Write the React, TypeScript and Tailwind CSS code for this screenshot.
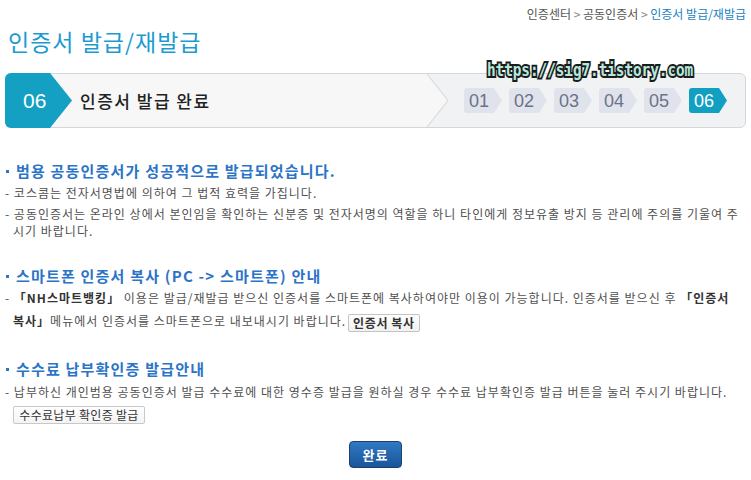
import type { ReactNode } from 'react'

const STEPS = ['01', '02', '03', '04', '05', '06']

function StepBadge({ label, active }: { label: string; active: boolean }) {
  return (
    <div
      className={`flex h-[25px] w-[38px] items-center rounded-l-[3px] pl-[5px] font-['Liberation_Sans',sans-serif] text-[18px] leading-none [clip-path:polygon(0_0,30px_0,38px_50%,30px_100%,0_100%)] ${
        active ? 'bg-[#12a0c2] text-white' : 'bg-[#e0e3eb] text-[#6b7289]'
      }`}
    >
      {label}
    </div>
  )
}

function SectionTitle({ children, className = '' }: { children: ReactNode; className?: string }) {
  return (
    <h2 className={`flex items-center text-[15px] leading-[20px] font-bold tracking-[1.2px] text-[#2b74c7] ${className}`}>
      <span className="mr-[7px] ml-px inline-block h-[3px] w-[3px] bg-[#2b74c7]" />
      {children}
    </h2>
  )
}

function Dash({ children, className = '' }: { children: ReactNode; className?: string }) {
  return <p className={`pl-[8px] -indent-[8px] ${className}`}>- {children}</p>
}

export default function App() {
  return (
    <div className="relative min-h-[480px] w-full bg-white px-[5px] pt-[6px] font-['Noto_Sans_CJK_KR',sans-serif] text-[12px] text-[#505050]">
      <div className="text-right leading-[16px] text-[#555]">
        인증센터 <span className="text-[#888]">&gt;</span> 공동인증서 <span className="text-[#888]">&gt;</span>{' '}
        <span className="text-[#1a7fc1]">인증서 발급/재발급</span>
      </div>

      <h1 className="mt-[4px] pl-[3px] text-[23px] leading-[30px] font-normal tracking-[1px] text-[#1b9bd1]">
        인증서 발급/재발급
      </h1>

      <div className="mt-[17px] flex h-[55px] rounded-[6px] border border-[#d3d6da] bg-[#f1f2f4]">
        <div className="flex flex-1 items-center rounded-l-[6px] bg-[#f7f7f7]">
          <div className="-my-px -ml-px flex h-[55px] w-[67px] items-center rounded-l-[6px] bg-[#13a0c2] pl-[18px] font-['Liberation_Sans',sans-serif] text-[21px] text-white [clip-path:polygon(0_0,45px_0,67px_50%,45px_100%,0_100%)]">
            06
          </div>
          <span className="ml-[8px] text-[17px] font-medium tracking-[1.5px] text-[#222]">인증서 발급 완료</span>
        </div>
        <svg width="22" height="53" viewBox="0 0 22 53" className="shrink-0">
          <polygon points="0,0 1,0 22,26.5 1,53 0,53" fill="#f7f7f7" />
          <polyline points="1,0 22,26.5 1,53" fill="none" stroke="#d9dbde" strokeWidth="1.2" />
        </svg>
        <div className="flex w-[297px] items-center gap-[7px] pl-[16px]">
          {STEPS.map((s) => (
            <StepBadge key={s} label={s} active={s === '06'} />
          ))}
        </div>
      </div>

      <span className="absolute top-[59px] left-[487px] origin-left scale-x-[0.8] font-['DejaVu_Sans_Mono',monospace] text-[18px] leading-[22px] font-bold tracking-[-0.1px] text-[#b4e9dd] [paint-order:stroke_fill] [-webkit-text-stroke:4px_#1c1c1c]">
        https://sig7.tistory.com
      </span>

      <div className="tracking-[1px]">
        <SectionTitle className="mt-[33px]">범용 공동인증서가 성공적으로 발급되었습니다.</SectionTitle>
        <div className="leading-[17px]">
          <Dash className="mt-[3px]">코스콤는 전자서명법에 의하여 그 법적 효력을 가집니다.</Dash>
          <Dash className="mt-[4px]">
            공동인증서는 온라인 상에서 본인임을 확인하는 신분증 및 전자서명의 역할을 하니 타인에게 정보유출 방지 등
            관리에 주의를 기울여 주<br />
            시기 바랍니다.
          </Dash>
        </div>

        <SectionTitle className="mt-[27px]">스마트폰 인증서 복사 (PC -&gt; 스마트폰) 안내</SectionTitle>
        <Dash className="leading-[23px] whitespace-nowrap">
          <b className="text-[#333]">「NH스마트뱅킹」</b> 이용은 발급/재발급 받으신 인증서를 스마트폰에 복사하여야만
          이용이 가능합니다. 인증서를 받으신 후 <b className="text-[#333]">「인증서</b>
          <br />
          <b className="text-[#333]">복사」</b>메뉴에서 인증서를 스마트폰으로 내보내시기 바랍니다.
          <button
            type="button"
            className="ml-[2px] inline-block h-[18px] rounded-[2px] border border-[#c3c3c3] bg-gradient-to-b from-white to-[#f1f1f1] px-[4px] align-middle indent-0 text-[12px] leading-[16px] font-bold tracking-[0.6px] text-[#333]"
          >
            인증서 복사
          </button>
        </Dash>

        <SectionTitle className="mt-[27px]">수수료 납부확인증 발급안내</SectionTitle>
        <Dash className="mt-[4px] leading-[17px] whitespace-nowrap">
          납부하신 개인범용 공동인증서 발급 수수료에 대한 영수증 발급을 원하실 경우 수수료 납부확인증 발급 버튼을
          눌러 주시기 바랍니다.
        </Dash>
        <button
          type="button"
          className="mt-[6px] ml-[8px] block h-[18px] w-[132px] rounded-[2px] border border-[#c8c8c8] bg-gradient-to-b from-white to-[#f3f3f3] text-[12px] leading-[16px] tracking-[0.3px] text-[#333]"
        >
          수수료납부 확인증 발급
        </button>
      </div>

      <div className="mt-[17px] flex justify-center">
        <button
          type="button"
          className="h-[27px] w-[53px] rounded-[4px] border border-[#1d3f6b] bg-gradient-to-b from-[#3079c3] to-[#1a559b] text-[13px] font-bold tracking-[1px] text-white"
        >
          완료
        </button>
      </div>
    </div>
  )
}
